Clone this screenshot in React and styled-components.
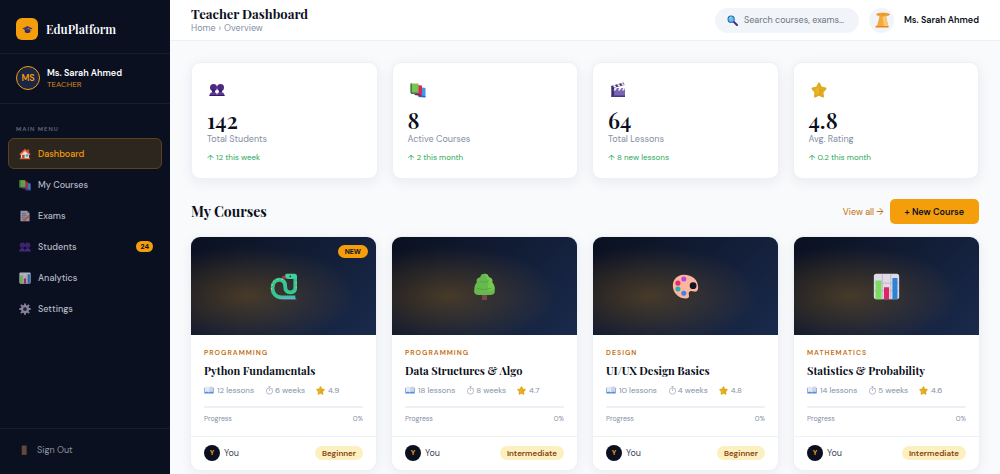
import React from "react"
import styled, { createGlobalStyle, ThemeProvider } from "styled-components"

const theme = {
  color: {
    navy: "#0a1020",
    amber: "#f59e0b",
    rust: "#c2700f",
    ink: "#0b1020",
    muted: "#8490a6",
    line: "#edf0f5",
    green: "#1fa856",
  },
  font: {
    body: `"DM Sans", Inter, "Noto Sans", sans-serif`,
    display: `"Playfair Display", "Liberation Serif", serif`,
  },
}

const navItems = [
  { label: "Dashboard", icon: "house", active: true },
  { label: "My Courses", icon: "books" },
  { label: "Exams", icon: "memo" },
  { label: "Students", icon: "people", count: 24 },
  { label: "Analytics", icon: "chart" },
  { label: "Settings", icon: "gear" },
]

const stats = [
  { icon: "people", value: "142", label: "Total Students", change: "12 this week" },
  { icon: "books", value: "8", label: "Active Courses", change: "2 this month" },
  { icon: "clapper", value: "64", label: "Total Lessons", change: "8 new lessons" },
  { icon: "star", value: "4.8", label: "Avg. Rating", change: "0.2 this month" },
]

const courses = [
  {
    icon: "snake",
    category: "Programming",
    title: "Python Fundamentals",
    lessons: 12,
    weeks: 6,
    rating: "4.9",
    level: "Beginner",
    isNew: true,
  },
  {
    icon: "tree",
    category: "Programming",
    title: "Data Structures & Algo",
    lessons: 18,
    weeks: 8,
    rating: "4.7",
    level: "Intermediate",
  },
  {
    icon: "palette",
    category: "Design",
    title: "UI/UX Design Basics",
    lessons: 10,
    weeks: 4,
    rating: "4.8",
    level: "Beginner",
  },
  {
    icon: "chart",
    category: "Mathematics",
    title: "Statistics & Probability",
    lessons: 14,
    weeks: 5,
    rating: "4.6",
    level: "Intermediate",
  },
]

// All drawings share a 32 x 32 box
const drawings = {
  cap: (
    <>
      <path d="M8 15v8c3 4 13 4 16 0v-8z" fill="#33285c" />
      <path d="M1 13 16 6l15 7-15 8z" fill="#45396f" />
      <path d="M16 13l11 3v8" fill="none" stroke="#d08a2a" strokeWidth="2" />
    </>
  ),
  house: (
    <>
      <path d="M5 15 16 5l11 10v14H5z" fill="#f3dcc6" />
      <path d="M22 4h5v8l-5-4z" fill="#c05a3a" />
      <path d="M1 16 16 2l15 14-3 3L16 8 4 19z" fill="#ef5a3c" />
      <path d="M8 18h7v11H8z" fill="#a4503c" />
      <path d="M18 17h7v6h-7z" fill="#2fa8e8" />
      <path d="M2 27h28v3H2z" fill="#e2603f" />
    </>
  ),
  books: (
    <>
      <path d="M19 10l12 2v17l-12-1z" fill="#3c9be6" />
      <path d="M17 26l14 2v3l-14-1z" fill="#2a62b8" />
      <path d="M13 6l11 1v19l-11-1z" fill="#e0245e" />
      <path d="M9 22l13 3v3L9 26z" fill="#8c1c66" />
      <path d="M1 3h16v19H1z" fill="#79c552" />
      <path d="M1 3h3v19H1z" fill="#397e4b" />
      <path d="M2 21h15v3H2z" fill="#397e4b" />
    </>
  ),
  memo: (
    <>
      <path d="M4 2h18l6 6v22H4z" fill="#b9b5c9" />
      <path d="M22 2v6h6z" fill="#77728e" />
      <path d="M8 9h10M8 14h12M8 19h8M8 24h5" stroke="#6d6886" strokeWidth="2" />
      <path d="M12 25 25 13l4 4-13 12-5 1z" fill="#d56d4f" />
    </>
  ),
  people: (
    <>
      <circle cx="9" cy="11" r="7" fill="#4c2a83" />
      <circle cx="23" cy="11" r="7" fill="#4c2a83" />
      <path d="M6 15h6v6H6zM20 15h6v6h-6z" fill="#3a2069" />
      <path d="M1 28c0-6 3-8 8-8s7 2 7 8zM16 28c0-6 2-8 7-8s8 2 8 8z" fill="#5b3597" />
      <path d="M1 26h30v2H1z" fill="#321b5d" />
    </>
  ),
  chart: (
    <>
      <rect x="1" y="1" width="30" height="30" rx="3" fill="#dedae8" />
      <path d="M1 12h30M1 21h30M11 1v30M21 1v30" stroke="#b9b1ca" />
      <path d="M3 9h7v22H3z" fill="#7ddb5d" />
      <path d="M13 17h6v14h-6z" fill="#dd2763" />
      <path d="M23 6h6v25h-6z" fill="#2c83d4" />
    </>
  ),
  gear: (
    <>
      <path
        d="M16 1v30M1 16h30M5 5l22 22M27 5 5 27"
        stroke="#a49eb9"
        strokeWidth="5"
      />
      <circle cx="16" cy="16" r="8" fill="none" stroke="#a49eb9" strokeWidth="6" />
      <circle cx="16" cy="16" r="5" fill="#292a3c" />
    </>
  ),
  door: <path d="M10 4h13v25H10z" fill="#7e5546" />,
  search: (
    <>
      <path d="M20 20l9 9" stroke="#50277e" strokeWidth="6" strokeLinecap="round" />
      <circle cx="12" cy="12" r="9" fill="#64c3f0" stroke="#1c62a4" strokeWidth="3" />
      <path d="M7 10c1-3 3-4 6-4" fill="none" stroke="#d4f3ff" strokeWidth="2" />
    </>
  ),
  bell: (
    <>
      <path d="M11 8h13l5 22H4c4-6 5-13 7-22z" fill="#f5a93a" />
      <path d="M17 8h7l5 22h-9z" fill="#fbc96a" />
      <path d="M3 28h26v3H3z" fill="#e88326" />
      <ellipse cx="18" cy="5" rx="13" ry="3" fill="#f39a1f" stroke="#d9821c" />
    </>
  ),
  clapper: (
    <>
      <path d="M3 12h27v18H3z" fill="#7a63b4" />
      <path d="M3 12h5v18H3z" fill="#3c2a6a" />
      <path d="M3 27h27v3H3z" fill="#4b377f" />
      <path d="M2 8 27 1l2 5L3 13z" fill="#43306f" />
      <path d="M6 7l4-1 3 4-5 1zM14 5l4-1 3 4-4 1zM22 3l4-1 2 4-3 1z" fill="#efeaf7" />
      <path d="M9 12h5l-3 5H7zM18 12h5l-3 5h-4zM26 12h4l-2 5h-4z" fill="#efeaf7" />
    </>
  ),
  star: (
    <>
      <path
        d="M16 3l4 8 9 2-6 7 1 9-8-4-8 4 1-9-6-7 9-2z"
        fill="#e9b824"
        stroke="#e0aa20"
        strokeWidth="4"
        strokeLinejoin="round"
      />
      <path d="M16 8l2 6 6 1-4 4 1 6-5-3z" fill="#d9a320" />
    </>
  ),
  openBook: (
    <>
      <path d="M1 9h30v18H1z" fill="#4f8fdc" />
      <path d="M3 6c5-2 10-1 13 2v16c-3-3-8-3-13-1z" fill="#e6e9f4" />
      <path d="M29 6c-5-2-10-1-13 2v16c3-3 8-3 13-1z" fill="#cfd4e6" />
    </>
  ),
  stopwatch: (
    <g fill="none" stroke="#8490a6" strokeWidth="2">
      <circle cx="16" cy="18" r="11" />
      <path d="M16 18v-7M16 7V3M12 2h8M25 8l3 3" />
    </g>
  ),
  snake: (
    <>
      <path
        d="M30 29H14C7 29 3 24 3 18 3 11 7 8 11 8c6 0 7 4 7 8 0 5 2 7 6 7s6-2 6-6V4"
        fill="none"
        stroke="#38c594"
        strokeWidth="4.5"
      />
      <path d="M20 1h9c2 0 3 1 3 3v3h-9c-4 0-5-1-5-3s0-3 2-3z" fill="#3fd19b" />
      <path d="M14 4l4-1v4l-3-1z" fill="#e51d58" />
      <path d="M9 29c3 2 5 2 8 2h15c-2-1-4-2-7-2z" fill="#78a6d8" />
      <circle cx="24" cy="4" r="1" fill="#18343b" />
      <path
        d="M2 20c-1-7 3-13 9-13 3 0 5 1 7 3M31 11v7"
        fill="none"
        stroke="#d9dc50"
        strokeDasharray="2 3"
      />
    </>
  ),
  tree: (
    <>
      <path d="M13 24h6v8h-6z" fill="#74484b" />
      <path
        d="M16 1c3 0 5 2 5 4 4 1 5 3 4 6 2 2 3 5 3 8 1 5-1 7-5 7H9c-4 0-6-2-5-7 0-3 1-6 3-8-1-3 0-5 4-6 0-2 2-4 5-4z"
        fill="#67b84d"
      />
      <path d="M16 1c3 0 5 2 5 4 4 1 5 3 4 6 2 2 3 5 3 8-3 3-7 3-9 1 3-4 2-13-3-19z" fill="#76c94e" />
      <path d="M10 10c4 1 8 1 11-1M7 18c6 2 12 2 17 0" fill="none" stroke="#4fa049" strokeWidth="1" />
    </>
  ),
  palette: (
    <>
      <path
        d="M14 2C6 2 1 8 1 15c0 8 6 14 13 15 5 1 7-1 6-4-1-4 2-6 6-4 4 1 5-2 5-5C31 8 24 2 14 2z"
        fill="#fcb59e"
      />
      <circle cx="25" cy="15" r="4" fill="#121525" />
      <circle cx="14" cy="7" r="3" fill="#b64be0" />
      <circle cx="7" cy="12" r="3" fill="#e72a70" />
      <circle cx="7" cy="19" r="3" fill="#25b1ad" />
      <circle cx="14" cy="24" r="3" fill="#3c85e8" />
    </>
  ),
}

const Emoji = ({ name, size }) => (
  <Drawing viewBox="0 0 32 32" width={size} height={size} aria-hidden="true">
    {drawings[name]}
  </Drawing>
)

const Sidebar = () => (
  <SidebarPanel>
    <Brand>
      <BrandMark>
        <Emoji name="cap" size={11} />
      </BrandMark>
      <BrandName>EduPlatform</BrandName>
    </Brand>
    <Profile>
      <Initials>MS</Initials>
      <div>
        <ProfileName>Ms. Sarah Ahmed</ProfileName>
        <ProfileRole>TEACHER</ProfileRole>
      </div>
    </Profile>
    <Nav>
      <NavHeading>MAIN MENU</NavHeading>
      {navItems.map((item) => (
        <NavLink
          key={item.label}
          href="#"
          $active={item.active}
          aria-current={item.active ? "page" : undefined}
        >
          <NavIcon $active={item.active}>
            <Emoji name={item.icon} size={12} />
          </NavIcon>
          {item.label}
          {item.count && <Count>{item.count}</Count>}
        </NavLink>
      ))}
    </Nav>
    <SidebarFooter>
      <SignOut type="button">
        <NavIcon>
          <Emoji name="door" size={12} />
        </NavIcon>
        Sign Out
      </SignOut>
    </SidebarFooter>
  </SidebarPanel>
)

const Header = () => (
  <TopBar>
    <div>
      <PageTitle>Teacher Dashboard</PageTitle>
      <Crumbs aria-label="Breadcrumb">
        <a href="#">Home</a>
        <span>›</span>
        <span>Overview</span>
      </Crumbs>
    </div>
    <TopActions>
      <SearchBox>
        <Emoji name="search" size={11} />
        <SearchInput
          type="text"
          aria-label="Search courses and exams"
          placeholder="Search courses, exams…"
        />
      </SearchBox>
      <BellButton type="button" aria-label="Notifications">
        <Emoji name="bell" size={16} />
      </BellButton>
      <TopName>Ms. Sarah Ahmed</TopName>
    </TopActions>
  </TopBar>
)

const StatCard = ({ stat }) => (
  <StatPanel>
    <StatIcon>
      <Emoji name={stat.icon} size={16} />
    </StatIcon>
    <StatValue>{stat.value}</StatValue>
    <StatLabel>{stat.label}</StatLabel>
    <StatChange>↑ {stat.change}</StatChange>
  </StatPanel>
)

const CourseCard = ({ course }) => (
  <Card>
    <Cover>
      <Emoji name={course.icon} size={27} />
      {course.isNew && <NewBadge>NEW</NewBadge>}
    </Cover>
    <CardBody>
      <Category>{course.category}</Category>
      <CourseTitle>{course.title}</CourseTitle>
      <Meta>
        <MetaItem>
          <Emoji name="openBook" size={10} />
          {course.lessons} lessons
        </MetaItem>
        <MetaItem $tight>
          <Emoji name="stopwatch" size={9} />
          {course.weeks} weeks
        </MetaItem>
        <MetaItem>
          <Emoji name="star" size={9} />
          {course.rating}
        </MetaItem>
      </Meta>
      <Track />
      <ProgressRow>
        <span>Progress</span>
        <span>0%</span>
      </ProgressRow>
    </CardBody>
    <CardFooter>
      <Owner>
        <OwnerMark>Y</OwnerMark>
        You
      </Owner>
      <Level>{course.level}</Level>
    </CardFooter>
  </Card>
)

const App = () => (
  <ThemeProvider theme={theme}>
    <GlobalStyle />
    <Shell>
      <Sidebar />
      <Main>
        <Header />
        <Content>
          <StatsGrid>
            {stats.map((stat) => (
              <StatCard key={stat.label} stat={stat} />
            ))}
          </StatsGrid>
          <SectionHeader>
            <SectionTitle>My Courses</SectionTitle>
            <SectionActions>
              <ViewAll href="#">View all →</ViewAll>
              <NewCourse type="button">+ New Course</NewCourse>
            </SectionActions>
          </SectionHeader>
          <CoursesGrid>
            {courses.map((course) => (
              <CourseCard key={course.title} course={course} />
            ))}
          </CoursesGrid>
        </Content>
      </Main>
    </Shell>
  </ThemeProvider>
)

export default App

const GlobalStyle = createGlobalStyle`
  * {
    box-sizing: border-box;
  }
  body {
    margin: 0;
    background: #f9fafc;
    color: ${theme.color.ink};
    font-family: ${theme.font.body};
    font-size: 9px;
    line-height: 12px;
  }
  h1, h2, h3, p {
    margin: 0;
  }
  a {
    color: inherit;
    text-decoration: none;
  }
  button, input {
    border: 0;
    padding: 0;
    background: none;
    color: inherit;
    font: inherit;
  }
  button {
    cursor: pointer;
  }
`

const Drawing = styled.svg`
  display: block;
  flex: none;
`

const Shell = styled.div`
  display: flex;
  height: 100vh;
`

const SidebarPanel = styled.aside`
  width: 170px;
  flex: none;
  display: flex;
  flex-direction: column;
  background: ${(props) => props.theme.color.navy};
  color: #b5b9c4;
`

const Brand = styled.div`
  display: flex;
  align-items: center;
  gap: 8px;
  padding: 18px 16px 13px;
  border-bottom: 1px solid #171d2d;
`

const BrandMark = styled.span`
  width: 22px;
  height: 22px;
  display: grid;
  place-items: center;
  border-radius: 6px;
  background: ${(props) => props.theme.color.amber};
`

const BrandName = styled.span`
  color: #fff;
  font-family: ${(props) => props.theme.font.display};
  font-size: 12px;
  font-weight: 600;
`

const Profile = styled.div`
  display: flex;
  align-items: center;
  gap: 7px;
  padding: 12px 16px 13px;
  border-bottom: 1px solid #171d2d;
`

const Initials = styled.span`
  width: 24px;
  height: 24px;
  display: grid;
  place-items: center;
  border: 1px solid ${(props) => props.theme.color.amber};
  border-radius: 50%;
  background: #1a2644;
  color: ${(props) => props.theme.color.amber};
  font-weight: 600;
`

const ProfileName = styled.p`
  color: #fff;
  font-weight: 600;
  line-height: 11px;
`

const ProfileRole = styled.p`
  color: #d98a1f;
  font-size: 8px;
  line-height: 10px;
`

const Nav = styled.nav`
  flex: 1;
  padding: 20px 8px 0;
`

const NavHeading = styled.p`
  padding: 0 8px 4px;
  color: #62687a;
  font-size: 6px;
  font-weight: 600;
  letter-spacing: 1px;
  line-height: 10px;
`

const NavLink = styled.a`
  height: 31px;
  display: flex;
  align-items: center;
  gap: 7px;
  padding: 0 8px 0 10px;
  border: 1px solid ${(props) => (props.$active ? "#5a4221" : "transparent")};
  border-radius: 6px;
  background: ${(props) => (props.$active ? "#2d261e" : "transparent")};
  color: ${(props) => (props.$active ? props.theme.color.amber : "inherit")};
  font-weight: 500;
`

const NavIcon = styled.span`
  opacity: ${(props) => (props.$active ? 1 : 0.8)};
`

const Count = styled.span`
  margin-left: auto;
  padding: 0 4px;
  border-radius: 6px;
  background: ${(props) => props.theme.color.amber};
  color: ${(props) => props.theme.color.navy};
  font-size: 7px;
  font-weight: 700;
  line-height: 11px;
`

const SidebarFooter = styled.div`
  padding: 6px 8px 10px;
  border-top: 1px solid #171d2d;
`

const SignOut = styled.button`
  width: 100%;
  height: 29px;
  display: flex;
  align-items: center;
  gap: 7px;
  padding: 0 10px;
  color: #8d929f;
`

const Main = styled.main`
  flex: 1;
  min-width: 0;
  overflow-y: auto;
  scrollbar-width: none;
`

const TopBar = styled.header`
  height: 41px;
  display: flex;
  align-items: center;
  justify-content: space-between;
  padding: 0 21px;
  border-bottom: 1px solid ${(props) => props.theme.color.line};
  background: #fff;
`

const PageTitle = styled.h1`
  font-family: ${(props) => props.theme.font.display};
  font-size: 13px;
  font-weight: 700;
  line-height: 16px;
`

const Crumbs = styled.nav`
  display: flex;
  gap: 3px;
  color: ${(props) => props.theme.color.muted};
  line-height: 12px;
`

const TopActions = styled.div`
  display: flex;
  align-items: center;
  gap: 10px;
`

const SearchBox = styled.label`
  width: 144px;
  height: 25px;
  display: flex;
  align-items: center;
  gap: 6px;
  padding: 0 12px;
  border-radius: 13px;
  background: #f1f4f9;
`

const SearchInput = styled.input`
  width: 100%;
  min-width: 0;
  outline: 0;
  &::placeholder {
    color: #70757f;
    opacity: 1;
  }
`

const BellButton = styled.button`
  width: 25px;
  height: 25px;
  display: grid;
  place-items: center;
  border-radius: 50%;
  background: #f1f4f9;
`

const TopName = styled.span`
  font-weight: 600;
`

const Content = styled.div`
  padding: 21px 21px 4px;
`

const StatsGrid = styled.section`
  display: grid;
  grid-template-columns: repeat(4, 1fr);
  gap: 14px;
`

const StatPanel = styled.article`
  padding: 18px 15px 15px;
  border: 1px solid ${(props) => props.theme.color.line};
  border-radius: 9px;
  background: #fff;
  box-shadow: 0 3px 14px rgba(20, 30, 70, 0.07);
`

const StatIcon = styled.div`
  padding: 1px 2px;
`

const StatValue = styled.p`
  margin-top: 8px;
  font-family: ${(props) => props.theme.font.display};
  font-size: 22px;
  font-weight: 600;
  line-height: 26px;
`

const StatLabel = styled.p`
  color: ${(props) => props.theme.color.muted};
`

const StatChange = styled.p`
  margin-top: 6px;
  color: ${(props) => props.theme.color.green};
  font-size: 8px;
`

const SectionHeader = styled.div`
  display: flex;
  align-items: center;
  justify-content: space-between;
  margin: 20px 0 13px;
`

const SectionTitle = styled.h2`
  font-family: ${(props) => props.theme.font.display};
  font-size: 14px;
  font-weight: 700;
  line-height: 20px;
`

const SectionActions = styled.div`
  display: flex;
  align-items: center;
  gap: 6px;
`

const ViewAll = styled.a`
  color: ${(props) => props.theme.color.rust};
`

const NewCourse = styled.button`
  height: 25px;
  padding: 0 15px;
  border-radius: 5px;
  background: ${(props) => props.theme.color.amber};
  font-weight: 600;
`

const CoursesGrid = styled.section`
  display: grid;
  grid-template-columns: repeat(4, 1fr);
  gap: 16px;
`

const Card = styled.article`
  overflow: hidden;
  border-radius: 9px;
  background: #fff;
  box-shadow: 0 0 0 1px #edf0f5, 0 3px 14px rgba(20, 30, 70, 0.07);
`

const Cover = styled.div`
  position: relative;
  height: 98px;
  display: grid;
  place-items: center;
  background: radial-gradient(
      ellipse at 30% 60%,
      rgba(245, 158, 11, 0.24),
      transparent 60%
    ),
    linear-gradient(135deg, #0a1020, #1a2a4c);
`

const NewBadge = styled.span`
  position: absolute;
  top: 8px;
  right: 8px;
  padding: 0 7px;
  border-radius: 7px;
  background: ${(props) => props.theme.color.amber};
  font-size: 7px;
  font-weight: 700;
  line-height: 13px;
`

const CardBody = styled.div`
  padding: 13px 13px 11px;
`

const Category = styled.p`
  color: ${(props) => props.theme.color.rust};
  font-size: 7px;
  font-weight: 600;
  letter-spacing: 1px;
  line-height: 10px;
  text-transform: uppercase;
`

const CourseTitle = styled.h3`
  margin-top: 5px;
  font-family: ${(props) => props.theme.font.display};
  font-size: 11px;
  font-weight: 700;
  line-height: 16px;
  white-space: nowrap;
`

const Meta = styled.div`
  display: flex;
  gap: 11px;
  margin: 5px 0 10px;
  color: ${(props) => props.theme.color.muted};
  font-size: 8px;
`

const MetaItem = styled.span`
  display: flex;
  align-items: center;
  gap: ${(props) => (props.$tight ? "1px" : "3px")};
`

const Track = styled.div`
  height: 2px;
  border-radius: 1px;
  background: #edf1f7;
`

const ProgressRow = styled.div`
  display: flex;
  justify-content: space-between;
  margin-top: 5px;
  color: ${(props) => props.theme.color.muted};
  font-size: 7px;
`

const CardFooter = styled.footer`
  display: flex;
  align-items: center;
  justify-content: space-between;
  padding: 8px 13px 9px;
  border-top: 1px solid ${(props) => props.theme.color.line};
`

const Owner = styled.span`
  display: flex;
  align-items: center;
  gap: 4px;
  color: #3f485c;
`

const OwnerMark = styled.span`
  width: 16px;
  height: 16px;
  display: grid;
  place-items: center;
  border-radius: 50%;
  background: ${(props) => props.theme.color.navy};
  color: ${(props) => props.theme.color.amber};
  font-size: 7px;
  font-weight: 700;
`

const Level = styled.span`
  padding: 0 7px;
  border-radius: 7px;
  background: #fdf0c0;
  color: #86400f;
  font-size: 8px;
  font-weight: 600;
  line-height: 14px;
`
